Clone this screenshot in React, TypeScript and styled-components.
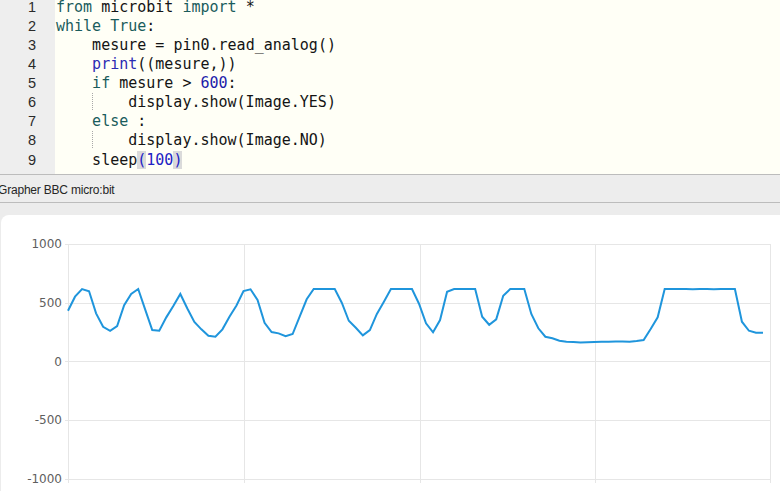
import React from "react";
import styled, { createGlobalStyle } from "styled-components";

const Global = createGlobalStyle`
  html, body { margin: 0; padding: 0; background: #ececec; }
  body { width: 780px; height: 491px; overflow: hidden; }
  * { box-sizing: border-box; }
`;

const Page = styled.div`
  display: flex;
  flex-direction: column;
  width: 780px;
  height: 491px;
  background: #ececec;
  overflow: hidden;
`;

const Editor = styled.div`
  display: flex;
  height: 175px;
  flex: none;
  background: #fffff6;
  border-bottom: 1px solid #bcbcbc;
  overflow: hidden;
`;

const Gutter = styled.div`
  width: 55px;
  flex: none;
  background: #eeeeee;
  padding-right: 19px;
  text-align: right;
  font-family: "Liberation Sans", Arial, sans-serif;
  font-size: 14.5px;
  color: #2a2a2a;
`;

const Lines = styled.div`
  margin-top: -2.5px;
`;

const LineNo = styled.div`
  height: 19.15px;
  line-height: 19.15px;
`;

const Code = styled.div`
  flex: 1;
  padding-left: 1px;
  font-family: "DejaVu Sans Mono", monospace;
  font-size: 15px;
  color: #141414;
`;

const CodeLine = styled.div`
  height: 19.15px;
  line-height: 19.15px;
  white-space: pre;
`;

const Indent = styled.span<{ $guide?: boolean }>`
  display: inline-block;
  width: 4ch;
  height: 17px;
  vertical-align: top;
  border-left: ${(p) => (p.$guide ? "1px dotted #a8a8a8" : "none")};
`;

const Kw = styled.span`
  color: #1a5c5c;
`;
const Builtin = styled.span`
  color: #2b2bb3;
`;
const Num = styled.span`
  color: #1c1caa;
`;
const Match = styled.span`
  color: #2222c4;
  background: #dadada;
`;
const Blue = styled.span`
  color: #2222c4;
`;

const StatusBar = styled.div`
  height: 28px;
  flex: none;
  display: flex;
  align-items: center;
  border-bottom: 1px solid #bcbcbc;
  background: #ededed;
  font-family: "Liberation Sans", Arial, sans-serif;
  font-size: 12px;
  letter-spacing: -0.2px;
  color: #262626;
`;

const StatusText = styled.span`
  margin-left: -2px;
  margin-top: 2px;
`;

const ChartArea = styled.div`
  flex: 1;
  padding: 12px 0 0 1px;
  background: #ececec;
  display: flex;
  min-height: 0;
`;

const Card = styled.div`
  flex: 1;
  background: #ffffff;
  border-radius: 8px 0 0 0;
  overflow: hidden;
`;

const data = [
  430, 550, 615, 596, 408, 294, 260, 300, 477, 573,
  615, 440, 266, 260, 374, 470, 573, 450, 335, 272,
  218, 209, 272, 380, 475, 598, 613, 522, 328, 249,
  238, 213, 232, 380, 528, 615, 615, 615, 615, 499,
  345, 286, 221, 266, 403, 507, 615, 615, 615, 615,
  490, 323, 247, 351, 592, 615, 615, 615, 615, 380,
  311, 357, 558, 615, 615, 615, 403, 281, 209, 196,
  175, 167, 165, 160, 162, 165, 166, 167, 168, 168,
  167, 172, 181, 275, 374, 615, 615, 615, 615, 614,
  615, 615, 614, 615, 615, 615, 337, 260, 243, 243,
];

const X0 = 67.5;
const X1 = 769.5;
const yOf = (v: number) => 146.3 - v * 0.1175;
const xOf = (i: number) => 67 + i * 7.02;

function Chart() {
  const ticks = [1000, 500, 0, -500, -1000];
  const vlines = [X0, 243.5, 419, 594.5, X1];
  const pts = data.map((v, i) => `${xOf(i).toFixed(2)},${yOf(v).toFixed(2)}`).join(" ");
  return (
    <svg width="779" height="276" viewBox="0 0 779 276">
      <g stroke="#e6e6e6" strokeWidth="1" shapeRendering="crispEdges">
        {ticks.map((t) => (
          <line key={t} x1={64} x2={X1} y1={Math.round(yOf(t)) + 0.5} y2={Math.round(yOf(t)) + 0.5} />
        ))}
        {vlines.map((x) => (
          <line key={x} x1={x} x2={x} y1={Math.round(yOf(1000))} y2={268} />
        ))}
      </g>
      <g
        fontFamily="'DejaVu Sans', sans-serif"
        fontSize="12"
        fill="#5e5e5e"
        textAnchor="end"
      >
        {ticks.map((t) => (
          <text key={t} x={61} y={yOf(t) + 4.3}>
            {t}
          </text>
        ))}
      </g>
      <polyline
        points={pts}
        fill="none"
        stroke="#1f95dc"
        strokeWidth="2"
        strokeLinejoin="miter"
      />
    </svg>
  );
}

export default function App() {
  const nums = [1, 2, 3, 4, 5, 6, 7, 8, 9];
  return (
    <Page>
      <Global />
      <Editor>
        <Gutter>
          <Lines>
            {nums.map((n) => (
              <LineNo key={n}>{n}</LineNo>
            ))}
          </Lines>
        </Gutter>
        <Code>
          <Lines>
            <CodeLine>
              <Kw>from</Kw> microbit <Kw>import</Kw> *
            </CodeLine>
            <CodeLine>
              <Kw>while</Kw> <Kw>True</Kw>:
            </CodeLine>
            <CodeLine>
              <Indent />mesure = pin0.read_analog()
            </CodeLine>
            <CodeLine>
              <Indent />
              <Builtin>print</Builtin>((mesure,))
            </CodeLine>
            <CodeLine>
              <Indent />
              <Kw>if</Kw> mesure &gt; <Num>600</Num>:
            </CodeLine>
            <CodeLine>
              <Indent />
              <Indent $guide />display.show(Image.YES)
            </CodeLine>
            <CodeLine>
              <Indent />
              <Kw>else</Kw> :
            </CodeLine>
            <CodeLine>
              <Indent />
              <Indent $guide />display.show(Image.NO)
            </CodeLine>
            <CodeLine>
              <Indent />sleep<Match>(</Match>
              <Blue>100</Blue>
              <Match>)</Match>
            </CodeLine>
          </Lines>
        </Code>
      </Editor>
      <StatusBar>
        <StatusText>Grapher BBC micro:bit</StatusText>
      </StatusBar>
      <ChartArea>
        <Card>
          <Chart />
        </Card>
      </ChartArea>
    </Page>
  );
}
